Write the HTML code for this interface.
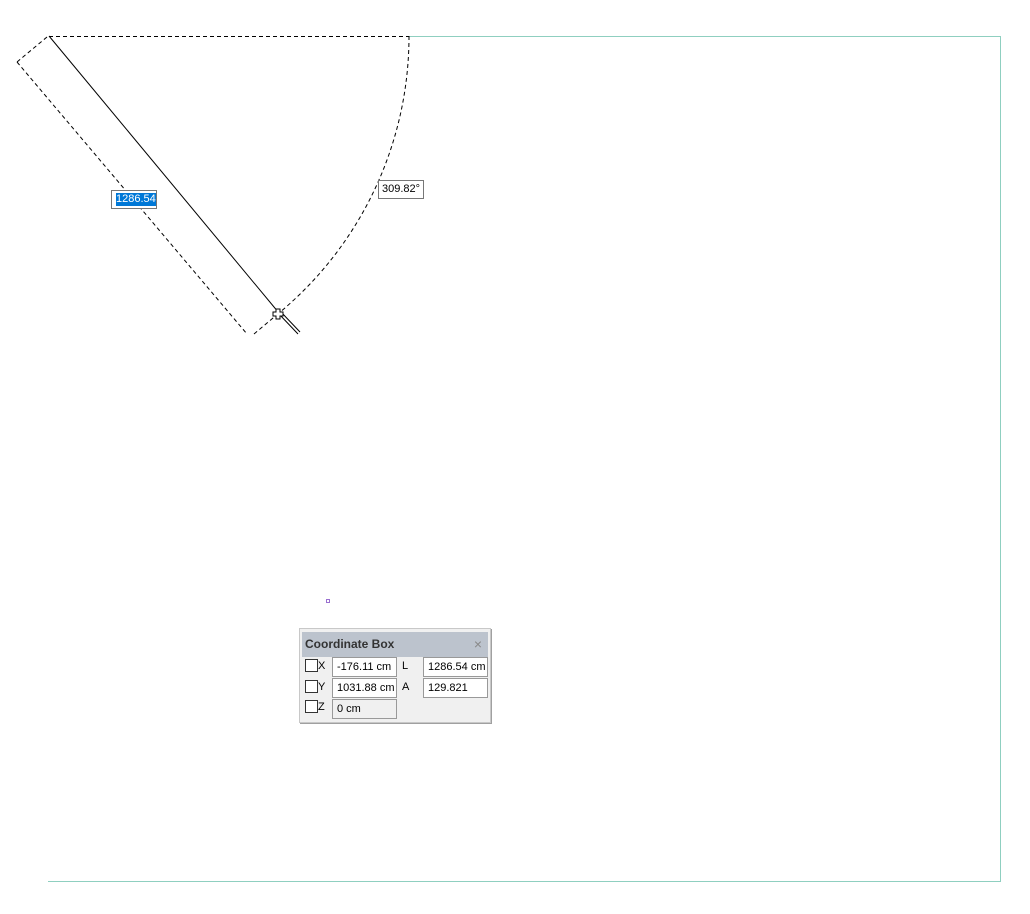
<!DOCTYPE html>
<html><head><style>
body{margin:0;width:1030px;height:914px;background:#fff;position:relative;overflow:hidden;font-family:"Liberation Sans",sans-serif}
.box{position:absolute;left:299px;top:628px;width:190px;height:93px;background:#f0f0f0;border:1px solid #c8c8c8;box-shadow:1px 1px 0 #a0a0a0}
.hdr{position:absolute;left:2px;top:3px;width:186px;height:25px;background:#bcc3cd;font-size:12px;font-weight:bold;color:#333;line-height:25px;padding-left:3px;box-sizing:border-box}
.x{position:absolute;right:6px;top:0;font-weight:normal;color:#888;font-size:14px}
.f{position:absolute;height:18px;border:1px solid #999;background:#fff;font-size:11px;line-height:18px;padding-left:4px;box-sizing:border-box;color:#000}
.cb{position:absolute;width:11px;height:11px;border:1px solid #333;background:#fff}
.l{position:absolute;font-size:11px;color:#000}
</style></head><body>
<svg width="1030" height="914" style="position:absolute;left:0;top:0">
<path d="M409 36.5H1000.5V881.5H48" fill="none" stroke="#8fcfc0" stroke-width="1"/>
<g fill="none" stroke="#000" stroke-width="1" stroke-dasharray="4,3">
<path d="M49 36.5H409"/>
<path d="M409 36 A360 360 0 0 1 279 313"/>
<path d="M47 37L17 62"/>
<path d="M17 62L247 334"/>
<path d="M254 334L279 313"/>
</g>
<path d="M49 36L279 313" stroke="#000" stroke-width="1"/>
<path d="M281 312L300 332M279 314L298 334" stroke="#000" stroke-width="1"/>
<path d="M276 309h4v3h3v4h-3v3h-4v-3h-3v-4h3z" fill="#fff" stroke="#000"/>
<rect x="326.5" y="599.5" width="3" height="3" fill="none" stroke="#9a70d0"/>
</svg>
<div style="position:absolute;left:111px;top:190px;width:44px;height:17px;border:1px solid #777;background:#fff"><div style="position:absolute;left:4px;top:2px;height:13px;background:#0078d7;color:#fff;font-size:11px;line-height:13px">1286.54</div></div>
<div style="position:absolute;left:378px;top:180px;width:44px;height:17px;border:1px solid #777;background:#fff;font-size:11px;line-height:17px;text-align:center">309.82°</div>
<div class="box">
<div class="hdr">Coordinate Box<span class="x">×</span></div>
<div class="cb" style="left:5px;top:30px"></div><div class="l" style="left:18px;top:31px">X</div>
<div class="f" style="left:32px;top:28px;width:65px;height:20px">-176.11 cm</div>
<div class="l" style="left:102px;top:31px">L</div>
<div class="f" style="left:123px;top:28px;width:65px;height:20px">1286.54 cm</div>
<div class="cb" style="left:5px;top:51px"></div><div class="l" style="left:18px;top:52px">Y</div>
<div class="f" style="left:32px;top:49px;width:65px;height:20px">1031.88 cm</div>
<div class="l" style="left:102px;top:52px">A</div>
<div class="f" style="left:123px;top:49px;width:65px;height:20px">129.821</div>
<div class="cb" style="left:5px;top:71px"></div><div class="l" style="left:18px;top:72px">Z</div>
<div class="f" style="left:32px;top:70px;width:65px;height:20px;background:#f0f0f0">0 cm</div>
</div>
</body></html>
